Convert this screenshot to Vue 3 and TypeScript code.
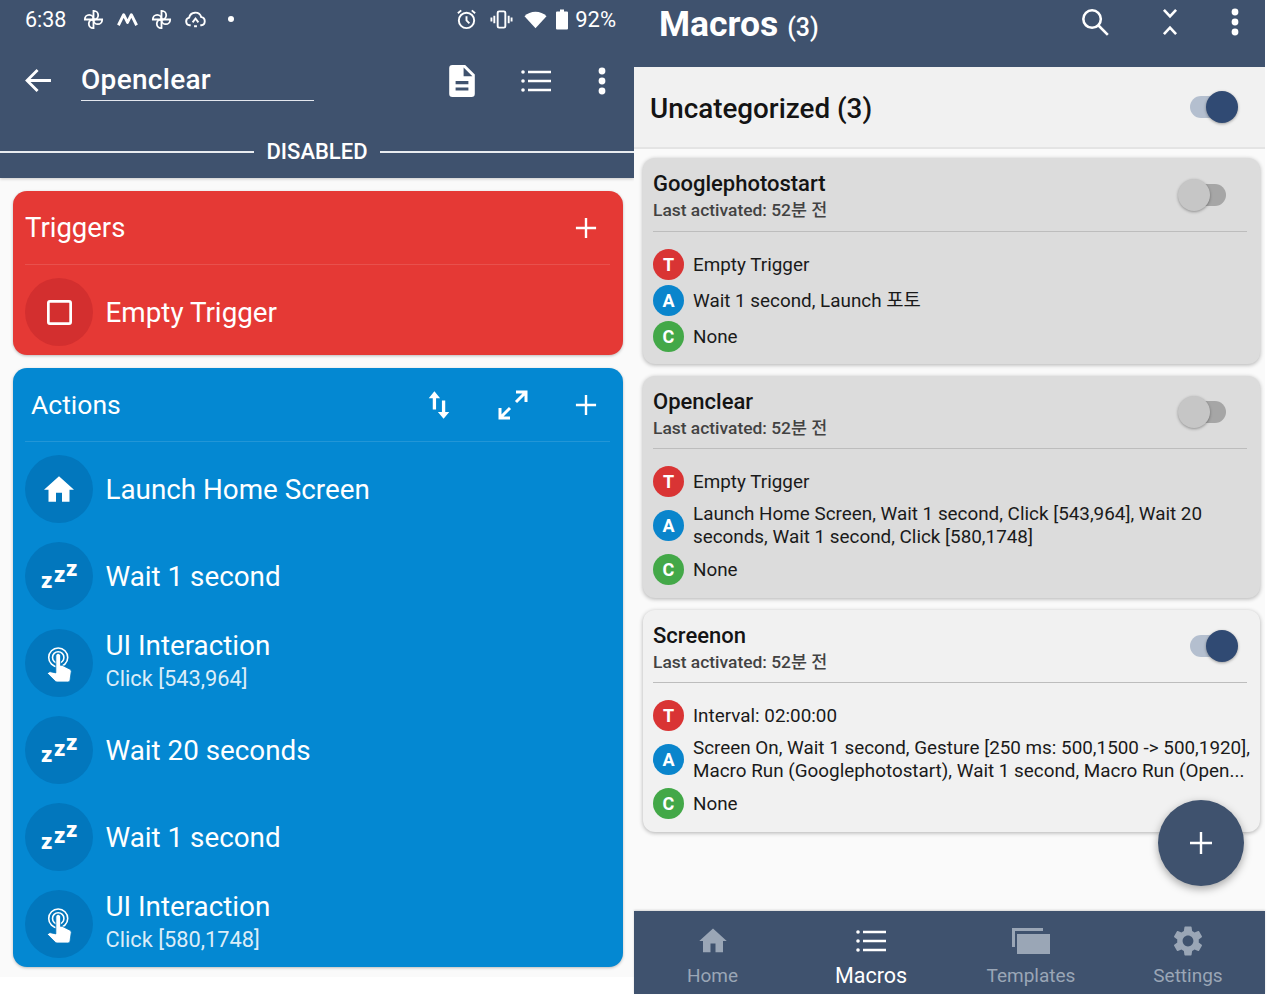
<script setup lang="ts">
type Part = { kind: 'T' | 'A' | 'C'; text: string }
type Macro = { name: string; enabled: boolean; parts: Part[] }
type Action = { icon: 'home' | 'zzz' | 'touch'; title: string; sub?: string }

const actions: Action[] = [
  { icon: 'home', title: 'Launch Home Screen' },
  { icon: 'zzz', title: 'Wait 1 second' },
  { icon: 'touch', title: 'UI Interaction', sub: 'Click [543,964]' },
  { icon: 'zzz', title: 'Wait 20 seconds' },
  { icon: 'zzz', title: 'Wait 1 second' },
  { icon: 'touch', title: 'UI Interaction', sub: 'Click [580,1748]' },
]

const macros: Macro[] = [
  {
    name: 'Googlephotostart',
    enabled: false,
    parts: [
      { kind: 'T', text: 'Empty Trigger' },
      { kind: 'A', text: 'Wait 1 second, Launch 포토' },
      { kind: 'C', text: 'None' },
    ],
  },
  {
    name: 'Openclear',
    enabled: false,
    parts: [
      { kind: 'T', text: 'Empty Trigger' },
      { kind: 'A', text: 'Launch Home Screen, Wait 1 second, Click [543,964], Wait 20\nseconds, Wait 1 second, Click [580,1748]' },
      { kind: 'C', text: 'None' },
    ],
  },
  {
    name: 'Screenon',
    enabled: true,
    parts: [
      { kind: 'T', text: 'Interval: 02:00:00' },
      { kind: 'A', text: 'Screen On, Wait 1 second, Gesture [250 ms: 500,1500 -> 500,1920],\nMacro Run (Googlephotostart), Wait 1 second, Macro Run (Open...' },
      { kind: 'C', text: 'None' },
    ],
  },
]

const navItems = ['Home', 'Macros', 'Templates', 'Settings']
const petals = [0, 90, 180, 270]
</script>

<template>
  <div class="page">
    <!-- Left phone: macro editor -->
    <section class="screen-left">
      <header class="edit-head">
        <div class="status">
          <span class="clock">6:38</span>
          <svg class="st-ic" viewBox="0 0 24 24" fill="none" stroke="#fff" stroke-width="1.9">
            <path v-for="r in petals" :key="r" d="M12 12V3h.4a4.5 4.5 0 0 1 0 9z" :transform="`rotate(${r} 12 12)`" />
          </svg>
          <svg class="st-ic" viewBox="0 0 24 24" fill="none" stroke="#fff" stroke-width="3" stroke-linejoin="round">
            <path d="M2.5 18 8 7l4 8 4-8 5.500 11" />
          </svg>
          <svg class="st-ic" viewBox="0 0 24 24" fill="none" stroke="#fff" stroke-width="1.9">
            <path v-for="r in petals" :key="r" d="M12 12V3h.4a4.5 4.5 0 0 1 0 9z" :transform="`rotate(${r} 12 12)`" />
          </svg>
          <svg class="st-ic" viewBox="0 0 24 24" fill="none" stroke="#fff" stroke-width="2">
            <path d="M7 18H6a4 4 0 0 1-.6-7.900A6.500 6.500 0 0 1 18 9.500a4.300 4.300 0 0 1 0 8.500h-1" />
            <path d="M9 15l3-4 3 4M10.500 19h3" />
          </svg>
          <span class="st-dot" />
          <span class="st-space" />
          <svg class="st-ic" viewBox="0 0 24 24" fill="none" stroke="#fff" stroke-width="2">
            <circle cx="12" cy="13" r="8" />
            <path d="M12 8.500V13l3 3M3 5.500 6.500 2.500M21 5.500l-3.500-3" />
          </svg>
          <svg class="st-ic st-vib" viewBox="0 0 24 24" fill="none" stroke="#fff" stroke-width="2">
            <rect x="8" y="3.500" width="8" height="17" rx="1.500" />
            <path d="M4.500 8v8M1.500 10v4M19.500 8v8M22.500 10v4" />
          </svg>
          <svg class="st-ic st-wifi" viewBox="0 0 24 24" fill="#fff">
            <path d="M12 21 .5 8.500C3.500 5.500 7.500 3.800 12 3.800s8.500 1.700 11.500 4.700z" />
          </svg>
          <svg class="st-batt" viewBox="0 0 12 20" fill="#fff">
            <path d="M4 0h4v2h3a1 1 0 0 1 1 1v16a1 1 0 0 1-1 1H1a1 1 0 0 1-1-1V3a1 1 0 0 1 1-1h3z" />
          </svg>
          <span class="pct">92%</span>
        </div>

        <div class="edit-bar">
          <svg class="back" viewBox="3 4 18 16" fill="#fff">
            <path d="M21 11H6.800l5.600-5.600L11 4l-8 8 8 8 1.400-1.400L6.800 13H21z" />
          </svg>
          <div class="name-field">Openclear</div>
          <svg class="bar-doc" viewBox="4 2 16 20" fill="#fff">
            <path d="M14 2H6a2 2 0 0 0-2 2v16a2 2 0 0 0 2 2h12a2 2 0 0 0 2-2V8zm2 16H8v-2h8zm0-4H8v-2h8zm-3-5V3.500L18.500 9z" />
          </svg>
          <svg class="bar-list" viewBox="0 0 30 24" fill="#fff">
            <circle cx="2" cy="3" r="1.800" /><circle cx="2" cy="12" r="1.800" /><circle cx="2" cy="21" r="1.800" />
            <path d="M7 1.800h23v2.400H7zM7 10.800h23v2.400H7zM7 19.800h23v2.400H7z" />
          </svg>
          <svg class="bar-more" viewBox="0 0 8 28" fill="#fff">
            <circle cx="4" cy="4" r="3.400" /><circle cx="4" cy="14" r="3.400" /><circle cx="4" cy="24" r="3.400" />
          </svg>
        </div>

        <div class="state-line"><span>DISABLED</span></div>
      </header>

      <div class="edit-body">
        <div class="panel panel-red">
          <div class="panel-head">
            <span class="panel-title">Triggers</span>
            <svg class="plus" viewBox="0 0 24 24" fill="none" stroke="#fff" stroke-width="2.600"><path d="M12 1v22M1 12h22" /></svg>
          </div>
          <div class="row row-red">
            <span class="disc disc-red">
              <svg class="ic-square" viewBox="0 0 24 24" fill="none" stroke="#fff" stroke-width="2.600"><rect x="1.300" y="1.300" width="21.400" height="21.400" rx="1.500" /></svg>
            </span>
            <span class="row-text"><span class="row-title">Empty Trigger</span></span>
          </div>
        </div>

        <div class="panel panel-blue">
          <div class="panel-head panel-head-blue">
            <span class="panel-title">Actions</span>
            <svg class="ic-swap" viewBox="0 0 24 30" fill="#fff">
              <path d="M7 0 .8 7.500h4.400V20h3.600V7.500h4.400zM17 30l6.200-7.500h-4.400V10h-3.600v12.500h-4.400z" />
            </svg>
            <svg class="ic-expand" viewBox="0 0 30 30" fill="none" stroke="#fff" stroke-width="3">
              <path d="M18 2h10v10M28 2 18 12M12 28H2V18M2 28l10-10" />
            </svg>
            <svg class="plus" viewBox="0 0 24 24" fill="none" stroke="#fff" stroke-width="2.600"><path d="M12 1v22M1 12h22" /></svg>
          </div>

          <div v-for="(a, i) in actions" :key="i" class="row">
            <span class="disc">
              <svg v-if="a.icon === 'home'" class="ic-home" viewBox="2 3 20 17" fill="#fff">
                <path d="M10 20v-6h4v6h5v-8h3L12 3 2 12h3v8z" />
              </svg>
              <svg v-else-if="a.icon === 'zzz'" class="ic-zzz" viewBox="0 0 40 40" fill="#fff">
                <text x="2" y="32" font-size="22">z</text>
                <text x="15" y="26" font-size="22">z</text>
                <text x="27" y="20" font-size="22">z</text>
              </svg>
              <svg v-else class="ic-touch" viewBox="0 0 24 24" fill="#fff">
                <circle cx="11.500" cy="8.500" r="6" fill="none" stroke="#fff" stroke-width="1" />
                <circle cx="11.500" cy="8.500" r="3.600" fill="none" stroke="#fff" stroke-width="1" />
                <path stroke="#0277bd" stroke-width=".5" d="m18.840 15.870-4.540-2.260c-.17-.07-.35-.11-.54-.11H13v-6c0-.83-.67-1.500-1.500-1.500S10 6.670 10 7.500v10.740l-3.430-.72c-.08-.01-.15-.03-.24-.03-.31 0-.59.13-.79.33l-.79.8 4.940 4.940c.27.27.65.44 1.060.44h6.790c.75 0 1.330-.55 1.440-1.280l.75-5.270c.01-.07.02-.14.02-.2 0-.62-.38-1.160-.91-1.380z" />
              </svg>
            </span>
            <span class="row-text" :class="{ 'row-text-two': a.sub }">
              <span class="row-title">{{ a.title }}</span>
              <span v-if="a.sub" class="row-sub">{{ a.sub }}</span>
            </span>
          </div>
        </div>
      </div>
    </section>

    <!-- Right phone: macro list -->
    <section class="screen-right">
      <header class="list-head">
        <h1 class="list-title">Macros <small>(3)</small></h1>
        <svg class="ic-search" viewBox="0 0 24 24" fill="none" stroke="#fff" stroke-width="2.200">
          <circle cx="9.500" cy="9.500" r="7.500" /><path d="m15 15 8 8" />
        </svg>
        <svg class="ic-fold" viewBox="0 0 16 30" fill="none" stroke="#fff" stroke-width="2.800">
          <path d="m1.500 2 6.500 7 6.500-7M1.500 28 8 21l6.500 7" />
        </svg>
        <svg class="bar-more" viewBox="0 0 8 28" fill="#fff">
          <circle cx="4" cy="4" r="3.400" /><circle cx="4" cy="14" r="3.400" /><circle cx="4" cy="24" r="3.400" />
        </svg>
      </header>

      <div class="category">
        <span class="cat-title">Uncategorized (3)</span>
        <span class="toggle toggle-on toggle-cat"><i /></span>
      </div>

      <div class="cards">
        <article v-for="m in macros" :key="m.name" class="card" :class="{ 'card-off': !m.enabled }">
          <div class="card-head">
            <div class="card-names">
              <div class="card-name">{{ m.name }}</div>
              <div class="card-last">Last activated: 52분 전</div>
            </div>
            <span class="toggle" :class="{ 'toggle-on': m.enabled }"><i /></span>
          </div>
          <div class="card-parts">
            <div v-for="p in m.parts" :key="p.kind" class="part">
              <span class="badge" :class="`badge-${p.kind}`">{{ p.kind }}</span>
              <span class="part-text">{{ p.text }}</span>
            </div>
          </div>
        </article>
      </div>

      <nav class="tabs">
        <div v-for="(n, i) in navItems" :key="n" class="tab" :class="{ 'tab-active': i === 1 }">
          <svg v-if="i === 0" class="tab-ic" viewBox="0 0 24 24" fill="#9aa6b6">
            <path d="M10 21v-7h4v7h6v-9h3L12 2 1 12h3v9z" />
          </svg>
          <svg v-else-if="i === 1" class="tab-ic" viewBox="0 0 30 24" fill="#fff">
            <circle cx="2" cy="3" r="1.800" /><circle cx="2" cy="12" r="1.800" /><circle cx="2" cy="21" r="1.800" />
            <path d="M7 1.800h23v2.400H7zM7 10.800h23v2.400H7zM7 19.800h23v2.400H7z" />
          </svg>
          <svg v-else-if="i === 2" class="tab-ic tab-ic-wide" viewBox="0 0 38 26" fill="#9aa6b6">
            <path d="M0 0h31v3H3v16H0z" />
            <path d="M5 6h33v20H5z" />
          </svg>
          <svg v-else class="tab-ic" viewBox="2 2 20 20" fill="#9aa6b6">
            <path d="M19.140 12.940c.04-.3.06-.61.06-.94 0-.32-.02-.64-.07-.94l2.030-1.580c.18-.14.23-.41.12-.61l-1.920-3.320c-.12-.22-.37-.29-.59-.22l-2.390.96c-.5-.38-1.030-.7-1.620-.94l-.36-2.540c-.04-.24-.24-.41-.48-.41h-3.840c-.24 0-.43.17-.47.41l-.36 2.540c-.59.24-1.130.57-1.620.94l-2.390-.96c-.22-.08-.47 0-.59.22L2.740 8.870c-.12.21-.08.47.12.61l2.030 1.580c-.05.3-.09.63-.09.94s.02.64.07.94l-2.030 1.580c-.18.14-.23.41-.12.61l1.920 3.320c.12.22.37.29.59.22l2.390-.96c.5.38 1.030.7 1.620.94l.36 2.540c.05.24.24.41.48.41h3.840c.24 0 .44-.17.47-.41l.36-2.540c.59-.24 1.130-.56 1.620-.94l2.390.96c.22.08.47 0 .59-.22l1.920-3.320c.12-.22.07-.47-.12-.61l-2.010-1.580zM12 15.600c-1.980 0-3.600-1.620-3.600-3.600s1.620-3.600 3.600-3.600 3.600 1.620 3.600 3.600-1.620 3.600-3.600 3.600z" />
          </svg>
          <span class="tab-label">{{ n }}</span>
        </div>
      </nav>

      <button class="fab" aria-label="Add macro">
        <svg viewBox="0 0 24 24" fill="none" stroke="#fff" stroke-width="2.400"><path d="M12 1v22M1 12h22" /></svg>
      </button>
    </section>
  </div>
</template>

<style>
html, body { background: #fff; }
</style>

<style scoped>
.page {
  display: flex;
  align-items: flex-start;
  width: 1280px;
  height: 1003px;
  overflow: hidden;
  background: #fff;
  font-family: Roboto, "Noto Sans CJK KR", sans-serif;
}

/* left phone */
.screen-left {
  width: 634px;
  height: 977px;
  flex-shrink: 0;
  background: #fafafa;
}
.edit-head {
  height: 178px;
  background: #3f526e;
  color: #fff;
  box-shadow: 0 1px 3px rgba(0, 0, 0, 0.2);
}
.status {
  display: flex;
  align-items: center;
  height: 38px;
  padding: 0 18px 0 25px;
}
.clock { font-size: 21.500px; margin-right: 16px; }
.st-ic { width: 23px; height: 23px; margin-right: 11px; }
.st-vib { margin-left: 1px; }
.st-wifi { margin-right: 9px; }
.st-dot { width: 6px; height: 6px; border-radius: 50%; background: #fff; margin-left: 10px; }
.st-space { flex: 1; }
.st-batt { width: 12px; height: 23px; margin-right: 7px; }
.pct { font-size: 22px; }

.edit-bar {
  display: flex;
  align-items: center;
  height: 63px;
  margin-top: 11px;
  padding-left: 25px;
}
.back { width: 26px; height: 23px; margin-right: 30px; flex-shrink: 0; }
.name-field {
  width: 233px;
  height: 41px;
  border-bottom: 1.500px solid #e3e7ee;
  font-size: 28px;
  font-weight: 500;
  letter-spacing: 0.3px;
  line-height: 40px;
  box-sizing: border-box;
}
.bar-doc { width: 26px; height: 32px; margin-left: 135px; }
.bar-list { width: 30px; height: 24px; margin-left: 46px; }
.edit-bar .bar-more { margin-left: 47px; }
.bar-more { width: 8px; height: 28px; }

.state-line {
  display: flex;
  align-items: center;
  gap: 12px;
  margin-top: 27px;
  font-size: 22px;
  font-weight: 500;
}
.state-line::before,
.state-line::after {
  content: "";
  flex: 1;
  height: 2px;
  background: #e9ecf0;
}

.edit-body {
  display: flex;
  flex-direction: column;
  gap: 13px;
  padding: 13px 11px 0 13px;
}
.panel {
  border-radius: 14px;
  padding: 0 13px 0 12px;
  color: #fff;
  box-shadow: 0 1px 3px rgba(0, 0, 0, 0.25);
}
.panel-red { height: 164px; background: #e53935; box-sizing: border-box; }
.panel-blue { height: 599px; background: #0488d2; box-sizing: border-box; }
.panel-head {
  display: flex;
  align-items: center;
  justify-content: space-between;
  height: 73px;
  border-bottom: 1px solid rgba(255, 255, 255, 0.12);
}
.panel-head-blue { justify-content: flex-start; padding-left: 6px; }
.panel-title { font-size: 27.500px; }
.panel-head-blue .panel-title { flex: 1; font-size: 26.500px; }
.plus { width: 22px; height: 22px; margin-right: 13px; }
.ic-swap { width: 22px; height: 28px; margin-right: 48px; }
.ic-expand { width: 30px; height: 30px; margin-right: 47px; }

.row {
  display: flex;
  align-items: center;
  gap: 12.500px;
  height: 68px;
  margin-top: 13px;
}
.panel-blue .row { margin-top: 19px; }
.panel-blue .panel-head + .row { margin-top: 13px; }
.disc {
  display: flex;
  align-items: center;
  justify-content: center;
  width: 68px;
  height: 68px;
  border-radius: 50%;
  background: #0277bd;
  flex-shrink: 0;
}
.disc-red { background: #d32f2f; }
.row-text { display: flex; flex-direction: column; padding-top: 2px; }
.row-text-two { padding: 0 0 5px; }
.row-title { font-size: 27.800px; line-height: 36px; }
.row-sub { font-size: 21.800px; line-height: 30px; color: #dcedf8; }
.ic-square { width: 25px; height: 25px; }
.ic-home { width: 30px; height: 26px; }
.ic-zzz { width: 40px; height: 40px; font-weight: 900; font-family: Roboto, sans-serif; }
.ic-touch { width: 38px; height: 38px; }

/* right phone */
.screen-right {
  position: relative;
  display: flex;
  flex-direction: column;
  width: 631px;
  height: 994px;
  flex-shrink: 0;
  background: #fafafa;
}
.list-head {
  display: flex;
  align-items: center;
  height: 67px;
  flex-shrink: 0;
  padding: 0 26px 20px 25px;
  box-sizing: border-box;
  background: #3f526e;
  color: #fff;
}
.list-title {
  flex: 1;
  margin: 0;
  font-size: 35.500px;
  font-weight: 700;
}
.list-title small { font-size: 25px; font-weight: 500; }
.ic-search { width: 28px; height: 28px; margin: 0 53px 4px 0; }
.ic-fold { width: 16px; height: 28px; margin: 0 53px 4px 0; }
.list-head .bar-more { margin-bottom: 4px; }

.category {
  display: flex;
  align-items: center;
  justify-content: space-between;
  height: 82px;
  flex-shrink: 0;
  padding: 0 28px 0 16px;
  box-sizing: border-box;
  background: #f1f1f1;
  border-bottom: 2px solid #e4e4e4;
}
.cat-title { padding-top: 3px; font-size: 27.800px; font-weight: 500; color: #141414; }

.toggle {
  position: relative;
  display: block;
  width: 47px;
  height: 22px;
  border-radius: 11px;
  background: #a6a6a6;
  margin-right: 21px;
}
.toggle i {
  position: absolute;
  left: -1px;
  top: -5px;
  width: 32px;
  height: 32px;
  border-radius: 50%;
  background: #c6c6c6;
  box-shadow: 0 1px 3px rgba(0, 0, 0, 0.35);
}
.toggle-on { background: #b4bfcf; margin-right: 10px; }
.toggle-on i { left: auto; right: -1px; background: #304a73; }
.toggle-cat { margin-right: 0; }

.cards {
  display: flex;
  flex-direction: column;
  gap: 12px;
  flex: 1;
  padding: 9px 5px 0 9px;
}
.card {
  padding: 0 10px 10px 10px;
  border-radius: 12px;
  background: #f1f1f1;
  box-shadow: 0 1px 4px rgba(0, 0, 0, 0.3);
}
.card + .card { padding-bottom: 11px; }
.card-off { background: #dcdcdc; }
.card-head {
  display: flex;
  align-items: center;
  justify-content: space-between;
  height: 74px;
  margin: 0 3px 0 0;
  border-bottom: 1px solid #bdbdbd;
  box-sizing: border-box;
}
.card + .card .card-head { height: 73px; }
.card-names { padding-top: 3px; }
.card-name { font-size: 22px; font-weight: 500; color: #141414; line-height: 28px; }
.card-last { font-size: 17.400px; font-weight: 500; color: #424242; line-height: 24px; }
.card-parts { margin-top: 14px; }
.part {
  display: flex;
  align-items: center;
  gap: 9px;
  min-height: 36px;
}
.part-text {
  padding: 4px 0 2px;
  font-size: 18.850px;
  line-height: 23px;
  color: #1a1a1a;
  white-space: pre;
}
.badge {
  display: flex;
  align-items: center;
  justify-content: center;
  width: 31px;
  height: 31px;
  border-radius: 50%;
  flex-shrink: 0;
  color: #fff;
  font-size: 18px;
  font-weight: 700;
}
.badge-T { background: #d93434; }
.badge-A { background: #0a85cc; }
.badge-C { background: #43a848; }

.tabs {
  display: grid;
  grid-template-columns: 157px 160px 160px 154px;
  height: 83px;
  flex-shrink: 0;
  background: #3f526e;
  box-shadow: 0 -1px 2px rgba(0, 0, 0, 0.15);
}
.tab {
  display: flex;
  flex-direction: column;
  align-items: center;
  padding-top: 15px;
  color: #9aa6b6;
  font-size: 19px;
}
.tab-ic { width: 30px; height: 30px; }
.tab-ic-wide { width: 38px; height: 30px; }
.tab-label { margin-top: 8px; line-height: 24px; }
.tab-active { color: #fff; font-size: 21.500px; }

.fab {
  position: absolute;
  left: 524px;
  top: 800px;
  display: flex;
  align-items: center;
  justify-content: center;
  width: 86px;
  height: 86px;
  padding: 0;
  border: none;
  border-radius: 50%;
  background: #3f526e;
  box-shadow: 0 3px 8px rgba(0, 0, 0, 0.35);
}
.fab svg { width: 24px; height: 24px; }
</style>
